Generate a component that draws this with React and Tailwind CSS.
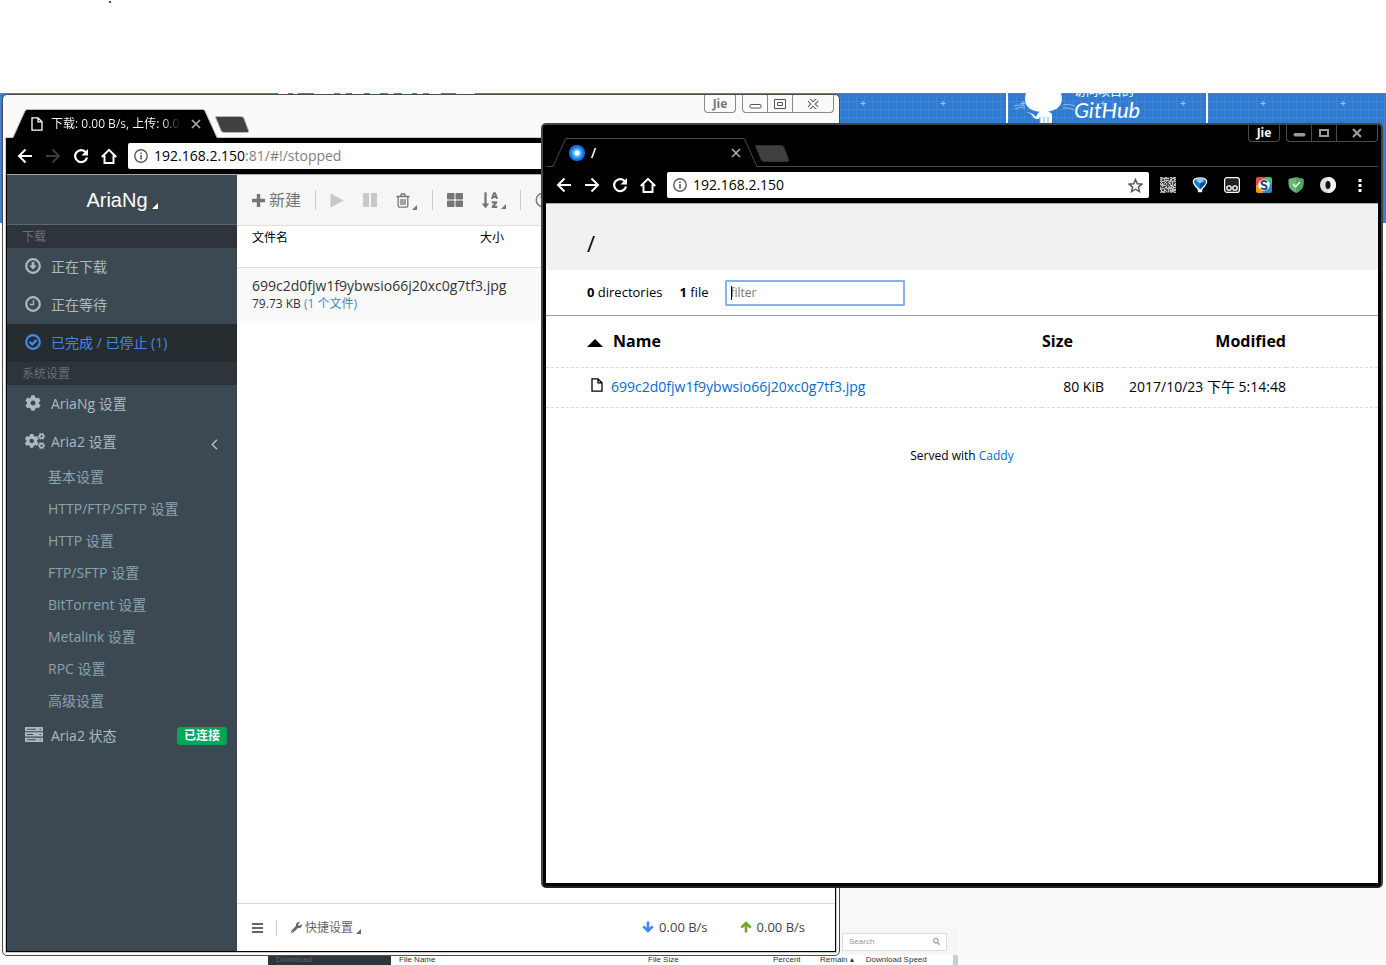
import { FaCog, FaCogs, FaThLarge, FaSortAlphaDown, FaWrench, FaSearch } from 'react-icons/fa';

const SUB_ITEMS = ['基本设置', 'HTTP/FTP/SFTP 设置', 'HTTP 设置', 'FTP/SFTP 设置', 'BitTorrent 设置', 'Metalink 设置', 'RPC 设置', '高级设置'];

const FONT = "font-['Open_Sans','Noto_Sans_CJK_SC',sans-serif]";

/* ---------- icons ---------- */

function BackIcon({ className }) {
  return (
    <svg viewBox="0 0 16 16" className={`h-4 w-4 ${className}`} fill="none" stroke="currentColor" strokeWidth="2">
      <path d="M15 8H2.5M8.5 1.5 2 8l6.500 6.500" />
    </svg>
  );
}

function ReloadIcon() {
  return (
    <svg viewBox="0 0 16 16" className="h-4 w-4">
      <path d="M13 4.600A6 6 0 1 0 14 9.500" fill="none" stroke="currentColor" strokeWidth="2.200" />
      <path d="M15 1v6.500H8.500z" fill="currentColor" />
    </svg>
  );
}

function HomeIcon() {
  return (
    <svg viewBox="0 0 16 16" className="h-4 w-4" fill="none" stroke="currentColor" strokeWidth="2">
      <path d="M.8 9 8 1.800 15.200 9M3.500 7.500V15h9V7.500" />
    </svg>
  );
}

function InfoIcon() {
  return (
    <svg viewBox="0 0 14 14" className="h-[14px] w-[14px] shrink-0 text-[#5a5a5a]" fill="none" stroke="currentColor">
      <circle cx="7" cy="7" r="6.200" strokeWidth="1.400" />
      <path d="M7 6v4.500M7 3.500V5" strokeWidth="1.600" />
    </svg>
  );
}

function PageIcon({ className }) {
  return (
    <svg viewBox="0 0 12 14" className={className} fill="none" stroke="currentColor" strokeWidth="1.300">
      <path d="M1 .8h6l4 4v8.400H1zM7 .8v4h4" />
    </svg>
  );
}

function CircleIcon({ thin, children }) {
  return (
    <svg viewBox="0 0 16 16" className="h-4 w-4" fill="none" stroke="currentColor" strokeWidth={thin ? 1.4 : 2.2}>
      <circle cx="8" cy="8" r="6.800" />
      {children}
    </svg>
  );
}

function PlusIcon() {
  return (
    <svg viewBox="0 0 13 13" className="h-[13px] w-[13px]" stroke="currentColor" strokeWidth="3.400">
      <path d="M6.500 0v13M0 6.500h13" />
    </svg>
  );
}

function ArrowIcon({ className }) {
  return (
    <svg viewBox="0 0 12 12" className={`h-3 w-3 ${className}`} fill="none" stroke="currentColor" strokeWidth="2.600">
      <path d="M6 .5v9M1.300 5.300 6 10l4.700-4.700" />
    </svg>
  );
}

function ServerIcon() {
  return (
    <svg viewBox="0 0 18 15" className="h-[15px] w-[18px]">
      <path d="M0 0h18v4.300H0zM0 5.300h18v4.300H0zM0 10.700h18V15H0z" fill="currentColor" />
      <path d="M2 2.200h9M2 7.500h6M2 12.800h9M14.500 2.200H16M14.500 7.500H16M14.500 12.800H16" stroke="#3d4952" strokeWidth="1.100" />
    </svg>
  );
}

function TrashIcon() {
  return (
    <svg viewBox="0 0 14 15" className="h-[15px] w-[14px]" fill="none" stroke="currentColor" strokeWidth="1.300">
      <path d="M.5 3.500h13M4.500 3.500 5.300 1h3.400l.8 2.500M2.200 3.500v9.300q0 1.400 1.400 1.400h6.800q1.400 0 1.400-1.400V3.500M5 6v6M7 6v6M9 6v6" />
    </svg>
  );
}

function Corner({ className }) {
  return (
    <svg viewBox="0 0 6 6" className={className}>
      <path d="M6 0v6H0z" fill="currentColor" />
    </svg>
  );
}

function CaddyIcon() {
  return (
    <svg viewBox="0 0 16 16" className="h-4 w-4">
      <circle cx="8" cy="8" r="8" fill="#1f70f5" />
      <circle cx="8" cy="8" r="5.200" fill="#38b6ff" />
      <circle cx="8" cy="8" r="2.800" fill="#fff" />
    </svg>
  );
}

/* ---------- browser chrome ---------- */

function Tab({ dark, icon, title }) {
  return (
    <div className="relative flex h-[29px] w-[206px] shrink-0 items-center self-end pl-[17px]">
      <svg viewBox="0 0 206 29" className="absolute inset-0 h-full w-full">
        <path d="M1 28.500 13 2Q13.700.5 15 .5H191Q192.300.5 193 2L205 28.500V29H1z" fill="#000" />
        <path d="M0 28.500H1L13 2Q13.700.5 15 .5H191Q192.300.5 193 2L205 28.500H206" fill="none" stroke={dark ? '#4a4a4a' : '#b5b5b5'} />
      </svg>
      <span className="relative flex w-4 justify-center text-white">{icon}</span>
      <span className="relative ml-[6px] w-[132px] whitespace-nowrap bg-linear-to-r from-white from-85% to-black bg-clip-text text-xs text-transparent">{title}</span>
      <button aria-label="Close tab" className="relative ml-2 text-[#aaa]">
        <svg viewBox="0 0 10 10" className="h-[10px] w-[10px]" stroke="currentColor" strokeWidth="1.700">
          <path d="m1 1 8 8M9 1 1 9" />
        </svg>
      </button>
    </div>
  );
}

function WindowControls({ dark }) {
  const line = dark ? 'border-[#4a4a4a]' : 'border-[#8a8a8a]';
  const glyph = dark ? '#9a9a9a' : '#fff';
  const edge = dark ? '#9a9a9a' : '#555';
  return (
    <div className={`flex h-[18px] gap-[6px] text-xs ${dark ? '' : 'pr-[2px]'}`}>
      <button className={`flex w-8 items-center justify-center rounded-b-[4px] border border-t-0 font-bold ${line} ${dark ? 'text-white' : 'text-[#777]'}`}>Jie</button>
      <div className={`flex rounded-b-[4px] border border-t-0 ${line}`}>
        <button aria-label="Minimize" className={`flex w-[25px] items-center justify-center border-r ${line}`}>
          <svg viewBox="0 0 13 12" className="h-3 w-[13px]"><rect x="1" y="6.500" width="11" height={dark ? 2.500 : 3.500} rx="1" fill={glyph} stroke={edge} /></svg>
        </button>
        <button aria-label="Maximize" className={`flex w-[25px] items-center justify-center border-r ${line}`}>
          <svg viewBox="0 0 12 10" className="h-[10px] w-3" fill="none" stroke={edge}>
            {dark ? <rect x="2" y="2" width="8" height="6" strokeWidth="2" /> : <path d="M.5.5h11v9H.5zM3.500 3.500h5v3h-5z" />}
          </svg>
        </button>
        <button aria-label="Close" className="flex w-10 items-center justify-center">
          <svg viewBox="0 0 12 10" className="h-[10px] w-3" fill="none">
            <path d="m2 1 8 8M10 1 2 9" stroke={edge} strokeWidth={dark ? 2.200 : 4} />
            {!dark && <path d="m2 1 8 8M10 1 2 9" stroke="#fff" strokeWidth="2.200" />}
          </svg>
        </button>
      </div>
    </div>
  );
}

function TitleBar({ dark, icon, title }) {
  return (
    <div className={`flex h-[43px] shrink-0 justify-between border-b pl-[6px] ${dark ? 'border-[#4a4a4a]' : 'border-[#b5b5b5]'}`}>
      <div className="-mb-px flex">
        <Tab dark={dark} icon={icon} title={title} />
        <button aria-label="New tab" className="-ml-1 mb-1 self-end">
          <svg viewBox="0 0 36 19" className="h-[19px] w-9">
            <path d="M2 1.500h25q2 0 3 2l4.500 12q.8 2-1.500 2H10q-2 0-3-2l-5-12q-1-2 0-2z" fill="#404040" stroke={dark ? '#303030' : '#b5b5b5'} />
          </svg>
        </button>
      </div>
      <WindowControls dark={dark} />
    </div>
  );
}

function NavBar({ forward, label, host, rest, children }) {
  return (
    <div className="flex h-[37px] shrink-0 items-center border-b border-[#aaa] bg-black pl-1 text-white">
      <button aria-label="Back" className="flex w-7 justify-center"><BackIcon className="" /></button>
      <button aria-label="Forward" className={`flex w-7 justify-center ${forward ? '' : 'text-[#3a3a3a]'}`}><BackIcon className="rotate-180" /></button>
      <button aria-label="Reload" className="flex w-7 justify-center"><ReloadIcon /></button>
      <button aria-label="Home" className="flex w-7 justify-center"><HomeIcon /></button>
      <div aria-label={label} className="ml-[5px] flex h-[26px] flex-1 items-center rounded-[2px] bg-white px-[6px] text-sm text-black">
        <InfoIcon />
        <span className="ml-[6px] flex-1">{host}<span className="text-[#808080]">{rest}</span></span>
        {children && (
          <button aria-label="Bookmark">
            <svg viewBox="0 0 16 16" className="h-[15px] w-[15px]" fill="none" stroke="#555" strokeWidth="1.500">
              <path d="m8 1.500 1.900 4.600 5 .4-3.800 3.200 1.200 4.900L8 12l-4.300 2.600 1.200-4.900L1.100 6.500l5-.4z" />
            </svg>
          </button>
        )}
      </div>
      {children}
    </div>
  );
}

// pseudo-random modules of the QR extension icon
const QR_CELLS = Array.from({ length: 256 }, (_, i) => i).filter((i) => {
  const v = Math.sin(i * 12.9898 + 4.1) * 43758.5453;
  return v - Math.floor(v) < 0.5;
});

function Extensions() {
  const cell = 'flex w-8 justify-center';
  return (
    <div className="ml-[3px] mr-[2px] flex">
      <button aria-label="QR code" className={cell}>
        <svg viewBox="0 0 16 16" className="h-4 w-4">
          <rect width="16" height="16" fill="#4a4a4a" />
          {QR_CELLS.map((i) => <rect key={i} x={i % 16} y={i >> 4} width="1" height="1" fill="#bbb" />)}
          <path d="M1.500 1.500h3v3h-3zM11.500 1.500h3v3h-3zM1.500 11.500h3v3h-3z" fill="#444" stroke="#bbb" />
        </svg>
      </button>
      <button aria-label="Downloader" className={cell}>
        <svg viewBox="0 0 16 16" className="h-4 w-4">
          <path d="M4 .8Q8-.3 12 .8q3.500 1.200 3.200 4.200-.2 2.500-4.700 7l-.5 3.200H6L5.500 12Q1 7.500.8 5 .5 2 4 .8z" fill="#fff" />
          <path d="M4 2Q8 .9 12 2q2.300 1 2 3-.3 2-6 7.500Q2.300 7 2 5q-.3-2 2-3z" fill="#1778d6" />
          <path d="M3.500 2.800Q8 1.200 12.500 2.800L8 6.500z" fill="#8fd0fb" />
          <path d="M8 6.500v6Q13.700 7 14 5z" fill="#0b4ba0" />
        </svg>
      </button>
      <button aria-label="Scripts" className={cell}>
        <svg viewBox="0 0 16 16" className="h-4 w-4" fill="none" stroke="#fff">
          <rect x=".6" y=".6" width="14.800" height="14.800" rx="2.500" fill="#222" strokeWidth="1.200" />
          <circle cx="5" cy="11" r="2.200" strokeWidth="1.300" />
          <circle cx="11" cy="11" r="2.200" strokeWidth="1.300" />
        </svg>
      </button>
      <button aria-label="Proxy" className={cell}>
        <svg viewBox="0 0 16 16" className="h-4 w-4">
          <path d="M2 0h7v8H0V2q0-2 2-2z" fill="#e74c3c" />
          <path d="M9 0h5q2 0 2 2v5H9z" fill="#2ecc71" />
          <path d="M0 8h7v8H2q-2 0-2-2z" fill="#f39c12" />
          <path d="M7 7h9v7q0 2-2 2H7z" fill="#2e86d8" />
          <circle cx="8" cy="8" r="5.800" fill="#fff" />
          <path d="M11 5.200Q9.500 4 7.800 4 5.500 4 5.500 5.800 5.500 7.400 8 8q2.700.6 2.700 2.200 0 1.900-2.700 1.900-1.800 0-3-1.200" fill="none" stroke="#26466d" strokeWidth="1.900" />
        </svg>
      </button>
      <button aria-label="Ad blocker" className={cell}>
        <svg viewBox="0 0 16 16" className="h-4 w-4">
          <path d="M8 .2 15.500 2v5q0 5.800-7.500 8.900Q.5 12.800.5 7V2z" fill="#68b877" />
          <path d="M8 .2 15.500 2v5q0 5.800-7.500 8.900z" fill="#4fa45e" />
          <path d="m5 7 2.500 2.700L12 5" fill="none" stroke="#fff" strokeWidth="1.500" />
        </svg>
      </button>
      <button aria-label="Zero" className={cell}>
        <svg viewBox="0 0 16 16" className="h-4 w-4">
          <circle cx="8" cy="8" r="8" fill="#ddd" />
          <path d="M8 0a8 8 0 0 1 0 16z" fill="#f3f3f3" />
          <ellipse cx="8" cy="8" rx="2.500" ry="4" fill="#111" />
        </svg>
      </button>
      <button aria-label="Menu" className={cell}>
        <svg viewBox="0 0 4 16" className="h-4 w-1" fill="#fff">
          <path d="M.5 2h3v3h-3zM.5 7h3v3h-3zM.5 12h3v3h-3z" />
        </svg>
      </button>
    </div>
  );
}

/* ---------- AriaNg ---------- */

function NavItem({ icon, label, active, children }) {
  return (
    <a href="#" className={`flex h-[38px] items-center pl-[18px] pr-[10px] text-sm ${active ? 'bg-[#242c2f] text-[#4289ee]' : 'text-[#acbac0]'}`}>
      <span className="flex w-[26px] shrink-0 pb-[3px]">{icon}</span>
      <span className="flex-1">{label}</span>
      {children}
    </a>
  );
}

function Sidebar() {
  const section = 'flex h-[23px] items-center bg-[#2d343c] pl-[15px] text-xs text-[#6e7072]';
  return (
    <nav className="flex w-[230px] shrink-0 flex-col bg-[#3d4952]">
      <button className="flex h-[50px] shrink-0 items-center justify-center border-b border-[#5c686f] font-['Liberation_Sans',sans-serif] text-xl text-white">
        AriaNg
        <Corner className="ml-1 mt-3 h-[6px] w-[6px]" />
      </button>
      <div className={section}>下载</div>
      <NavItem icon={<CircleIcon><path d="M8 4v4" strokeWidth="2.800" /><path d="M4.200 7.500h7.600L8 11.500z" fill="currentColor" stroke="none" /></CircleIcon>} label="正在下载" />
      <NavItem icon={<CircleIcon><path d="M8.500 4v4.500H5" strokeWidth="1.300" /></CircleIcon>} label="正在等待" />
      <NavItem active icon={<CircleIcon><path d="m4.500 7.800 2.700 2.600 4.500-4.500" /></CircleIcon>} label="已完成 / 已停止 (1)" />
      <div className={section}>系统设置</div>
      <NavItem icon={<FaCog className="h-4 w-4" />} label="AriaNg 设置" />
      <NavItem icon={<FaCogs className="h-5 w-5" />} label="Aria2 设置">
        <svg viewBox="0 0 7 11" className="mr-[9px] mt-1 h-[11px] w-[7px]" fill="none" stroke="currentColor" strokeWidth="1.600"><path d="M6 .8 1.300 5.500 6 10.200" /></svg>
      </NavItem>
      {SUB_ITEMS.map((item) => (
        <a key={item} href="#" className="flex h-8 items-center pl-[41px] text-sm text-[#8aa4af]">{item}</a>
      ))}
      <NavItem icon={<ServerIcon />} label="Aria2 状态">
        <span className="flex h-[18px] items-center rounded-[3px] bg-[#00a65a] px-[7px] text-xs font-bold text-white">已连接</span>
      </NavItem>
    </nav>
  );
}

function AriaNgWindow() {
  const divider = 'h-5 w-px bg-[#ccc]';
  return (
    <section className="absolute bottom-[9px] left-[2px] top-[94px] flex w-[838px] flex-col rounded-[5px] border border-[#4a4a4a] bg-[#fafafa] px-[3px] pb-[3px]">
      <TitleBar icon={<PageIcon className="h-[14px] w-3" />} title="下载: 0.00 B/s, 上传: 0.0" />
      <div className="flex min-h-0 flex-1 flex-col border border-t-0 border-black bg-white ring-1 ring-[#ccc]">
        <NavBar label="Address" host="192.168.2.150" rest=":81/#!/stopped" />
        <div className="flex min-h-0 flex-1">
          <Sidebar />
          <main className="flex min-w-0 flex-1 flex-col">
            <div className="flex h-[51px] shrink-0 items-center border-b border-[#ddd] bg-[#f6f6f6] pl-[15px] text-[#757575]">
              <button className="flex items-center gap-1 text-base"><PlusIcon />新建</button>
              <span className={`ml-[14px] ${divider}`} />
              <button aria-label="Start" disabled className="ml-[14px] text-[#c8c8c8]">
                <svg viewBox="0 0 14 15" className="h-[15px] w-[14px]" fill="currentColor"><path d="M.5.300 13.500 7.500.5 14.700z" /></svg>
              </button>
              <button aria-label="Pause" disabled className="ml-[18px] text-[#c8c8c8]">
                <svg viewBox="0 0 16 14" className="h-[14px] w-4" fill="currentColor"><path d="M1 0h6v14H1zM9 0h6v14H9z" /></svg>
              </button>
              <button aria-label="Delete" className="ml-[18px] flex items-end"><TrashIcon /><Corner className="-mb-[2px] ml-[2px] h-[5px] w-[5px]" /></button>
              <span className={`ml-[15px] ${divider}`} />
              <button aria-label="Select all" className="ml-[14px]"><FaThLarge className="h-4 w-4" /></button>
              <button aria-label="Sort" className="ml-[18px] flex items-end"><FaSortAlphaDown className="h-[18px] w-[18px]" /><Corner className="ml-[2px] h-[5px] w-[5px]" /></button>
              <span className={`ml-[14px] ${divider}`} />
              <button aria-label="Help" className="ml-[14px]">
                <CircleIcon thin><path d="M6 6q0-2 2-2t2 2q0 1-2 2.500V10" strokeWidth="1.300" /></CircleIcon>
              </button>
            </div>
            <table className="w-full table-fixed text-left text-xs">
              <thead>
                <tr className="h-[41px] border-b border-[#ddd] align-top text-black">
                  <th className="w-[228px] pl-[15px] pt-1 font-normal">文件名</th>
                  <th className="pl-[15px] pt-1 font-normal">大小</th>
                </tr>
              </thead>
              <tbody>
                <tr className="h-[54px] bg-[#f9f9f9] text-[#333]">
                  <td colSpan="2" className="pl-[15px]">
                    <div className="text-sm leading-5">699c2d0fjw1f9ybwsio66j20xc0g7tf3.jpg</div>
                    <div className="text-xs">79.73 KB <a href="#" className="text-[#3c8dbc]">(1 个文件)</a></div>
                  </td>
                </tr>
              </tbody>
            </table>
            <footer className="mt-auto flex h-12 shrink-0 items-center border-t border-[#d2d6de] pl-[15px] pr-[30px] text-xs text-[#666]">
              <button aria-label="Toggle menu">
                <svg viewBox="0 0 11 10" className="h-[10px] w-[11px]" stroke="currentColor" strokeWidth="2"><path d="M0 1h11M0 5h11M0 9h11" /></svg>
              </button>
              <span className="ml-[13px] h-4 w-px bg-[#ccc]" />
              <button className="ml-[14px] flex items-center gap-[3px]"><FaWrench className="h-[11px] w-[11px]" />快捷设置<Corner className="mt-2 h-[5px] w-[5px]" /></button>
              <span className="ml-auto flex items-center gap-[5px] text-[13px] text-[#444]"><ArrowIcon className="text-[#3c88ee]" />0.00 B/s</span>
              <span className="ml-8 flex items-center gap-[5px] text-[13px] text-[#444]"><ArrowIcon className="rotate-180 text-[#74a329]" />0.00 B/s</span>
            </footer>
          </main>
        </div>
      </div>
    </section>
  );
}

/* ---------- Caddy file listing ---------- */

function CaddyWindow() {
  const row = 'border-b border-dashed border-[#dadada]';
  return (
    <section className="absolute bottom-[77px] left-[541px] right-[3px] top-[123px] flex flex-col rounded-[5px] border-2 border-[#444] border-b-[#222] bg-black px-[3px] pb-[3px]">
      <div className="-mt-px flex flex-col">
        <TitleBar dark icon={<CaddyIcon />} title={<span className="text-sm text-white">/</span>} />
        <NavBar forward label="Address" host="192.168.2.150"><Extensions /></NavBar>
      </div>
      <div className="min-h-0 flex-1 bg-white text-black">
        <header className="flex h-[66px] items-center bg-[#f1f1f1] pl-[41px] pt-3">
          <h1 className="text-[22px]">/</h1>
        </header>
        <div className="flex h-[46px] items-center border-b border-[#9c9c9c] pl-[41px] text-[13px]">
          <span><b>0</b> directories</span>
          <span className="ml-[17px]"><b>1</b> file</span>
          <div className="relative ml-4">
            <input type="text" aria-label="filter" placeholder="filter" className="block h-[26px] w-[180px] rounded-[1px] border-2 border-[#8ab0f0] px-1 text-xs caret-transparent outline-none placeholder:text-[#757575]" />
            {/* text cursor */}
            <span className="absolute left-[6px] top-[6px] h-[14px] w-px bg-black" />
          </div>
        </div>
        <table className="w-full table-fixed text-sm">
          <colgroup>
            <col />
            <col className="w-[82px]" />
            <col className="w-[162px]" />
            <col className="w-[92px]" />
          </colgroup>
          <thead>
            <tr className={`h-[51px] text-base ${row}`}>
              <th className="text-left">
                <span className="flex items-center pl-[41px]">
                  <svg viewBox="0 0 16 8" className="mr-[10px] mt-1 h-2 w-4"><path d="M8 0 16 8H0z" /></svg>
                  Name
                </span>
              </th>
              <th className="text-left">Size</th>
              <th className="text-right">Modified</th>
              <th />
            </tr>
          </thead>
          <tbody>
            <tr className={`h-10 ${row}`}>
              <td>
                <span className="flex items-center pl-[45px]">
                  <PageIcon className="mb-1 mr-2 h-[14px] w-3" />
                  <a href="#" className="text-[#006ed3]">699c2d0fjw1f9ybwsio66j20xc0g7tf3.jpg</a>
                </span>
              </td>
              <td className="pr-5 text-right">80 KiB</td>
              <td className="whitespace-nowrap text-right">2017/10/23 下午 5:14:48</td>
              <td />
            </tr>
          </tbody>
        </table>
        <footer className="pt-10 text-center text-xs">Served with <a href="#" className="text-[#006ed3]">Caddy</a></footer>
      </div>
    </section>
  );
}

/* ---------- page behind the windows ---------- */

function Backdrop() {
  return (
    <div className="flex h-full flex-col bg-white">
      <div className="h-[93px] shrink-0 pl-[109px] pt-px"><div className="h-[2px] w-[2px] bg-[#4a4a6a]" /></div>
      <div className="relative h-[130px] shrink-0 overflow-hidden bg-[#2f7bd1] bg-[linear-gradient(#ffffff12_1px,transparent_1px),linear-gradient(90deg,#ffffff12_1px,transparent_1px)] bg-[size:8px_8px]">
        <svg className="absolute inset-0 h-full w-full">
          <defs>
            <pattern id="plus" width="80" height="80" patternUnits="userSpaceOnUse" x="23" y="-30">
              <path d="M40 38v5M37.500 40.500h5" stroke="#9cc3ee" />
            </pattern>
          </defs>
          <rect width="100%" height="100%" fill="url(#plus)" />
          <path d="M278 .5h10M293 .5h5M314 .5h20M340 .5h6M352 .5h12M370 .5h10M388 .5h6M402 .5h10M417 .5h6M429 .5h12M456 .5h19" stroke="#fff" />
        </svg>
        <div className="absolute left-[1006px] top-0 h-10 w-[202px] border-x-2 border-white text-white">
          <svg viewBox="0 0 64 32" className="absolute left-[5px] top-0 h-8 w-16">
            <path d="M13 0Q9 14 22 18q8 2 16 0Q52 14 48 0z" fill="#fff" />
            <path d="M12 19q6 0 9 6 3 2 6 0v7h12V21q-4-4-11-3-3 1-5 6-4-5-11-5z" fill="#fff" />
            <path d="M27 24v8M31 24v8M35 24v8" stroke="#7fb0e6" />
            <path d="M1 13q6-2 11 0M2 16q5-3 10-1M50 12q6-2 12 1M50 15q6-1 11 2" fill="none" stroke="#8fbbe9" />
          </svg>
          <div className="-mt-[11px] pl-[66px] text-xs leading-5">访问项目的</div>
          <div className="pl-[66px] font-[Lato,sans-serif] text-[22px] leading-4 italic">GitHub</div>
        </div>
      </div>
      <div className="flex-1" />
      <div className="flex h-[78px] shrink-0 flex-col justify-end bg-[#fafafa] font-['Liberation_Sans',sans-serif] text-[8px] text-[#333]">
        <div className="flex h-[27px] w-[958px] items-center justify-end bg-[#f6f6f6] pr-[11px]">
          <div className="flex h-[18px] w-[105px] items-center border border-[#ddd] bg-white px-[6px] text-[#999]">
            <input aria-label="Search" placeholder="Search" className="w-0 flex-1 outline-none placeholder:text-[#999]" />
            <FaSearch className="h-[7px] w-[7px]" />
          </div>
        </div>
        <div className="flex h-[10px] w-[958px] items-center pl-[268px] leading-none">
          <span className="flex h-full w-[123px] items-center bg-[#2d343c] pl-2 text-[#5f6468]">Download</span>
          <span className="grid h-full flex-1 grid-cols-[249px_125px_47px_auto] items-center bg-white pl-2">
            <span>File Name</span>
            <span>File Size</span>
            <span>Percent</span>
            <span className="flex gap-3"><span>Remain ▴</span><span>Download Speed</span></span>
          </span>
          <span className="h-full w-[5px] bg-[#c0d0da]" />
        </div>
      </div>
    </div>
  );
}

export default function App() {
  return (
    <div className={`relative h-screen overflow-hidden ${FONT}`}>
      <Backdrop />
      <AriaNgWindow />
      <CaddyWindow />
    </div>
  );
}
